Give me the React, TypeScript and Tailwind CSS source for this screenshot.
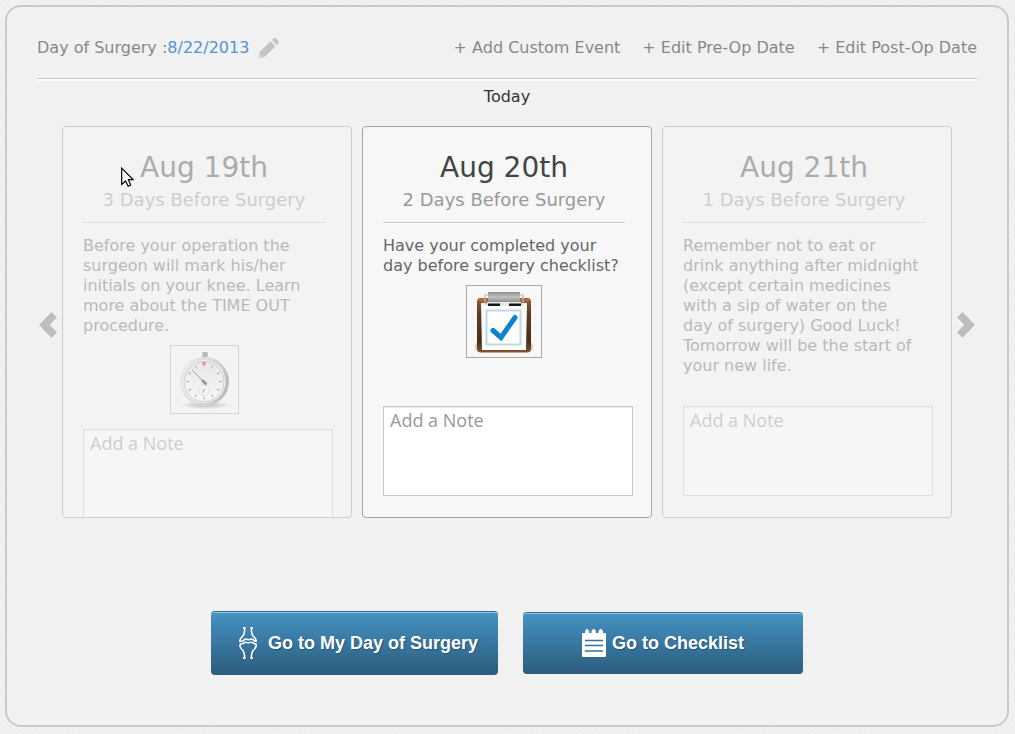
import type { ReactNode } from "react";

const sans = "font-['DejaVu_Sans',sans-serif]";

function PencilIcon() {
  return (
    <svg width="22" height="22" viewBox="0 0 22 22" fill="#c4c4c4" aria-hidden="true">
      <path d="M1 21 L1.6 14.8 L12.6 4.2 L17.6 9.4 L6.8 19.8 Z M2.4 17.6 L2.2 19.8 L4.4 19.6 Z" fillRule="evenodd" />
      <path d="M14 3 L16.4 0.8 Q17 0.4 17.6 1 L20.8 4.4 Q21.4 5 20.8 5.8 L18.8 8 Z" />
    </svg>
  );
}

function ArrowIcon({ flip = false }: { flip?: boolean }) {
  return (
    <svg width="18" height="28" viewBox="0 0 18 28" className={flip ? "rotate-180" : ""} aria-hidden="true">
      <path d={flip ? "M12.5 0 L18 6 L11.5 12 L18 19 L12.5 25 L0 12 Z" : "M12.5 3 L18 9 L11.5 15 L18 22 L12.5 28 L0 15 Z"} fill="#fcfcfc" />
      <path d="M12.5 1 L18 6.5 L11 14 L18 21.5 L12.5 27 L0 14 Z" fill="#bdbdbd" />
    </svg>
  );
}

function StopwatchIcon() {
  const ticks = Array.from({ length: 12 }, (_, i) => i * 30);
  return (
    <svg width="61" height="61" viewBox="0 0 61 61" aria-hidden="true">
      <defs>
        <linearGradient id="watchRim" x1="0" y1="0.2" x2="1" y2="0.5">
          <stop offset="0" stopColor="#e2e2e6" />
          <stop offset="0.4" stopColor="#c2c2c8" />
          <stop offset="0.75" stopColor="#a0a0a4" />
          <stop offset="1" stopColor="#66666a" />
        </linearGradient>
        <linearGradient id="watchFace" x1="0" y1="0" x2="0" y2="1">
          <stop offset="0" stopColor="#dcdcde" />
          <stop offset="1" stopColor="#ffffff" />
        </linearGradient>
        <radialGradient id="watchShadow">
          <stop offset="0" stopColor="#666" />
          <stop offset="1" stopColor="#666" stopOpacity="0" />
        </radialGradient>
      </defs>
      <ellipse cx="31" cy="56" rx="25" ry="4" fill="url(#watchShadow)" />
      <rect x="28" y="3" width="6" height="5" rx="1" fill="#80808c" />
      <rect x="30" y="3" width="2" height="5" fill="#50505e" />
      <path d="M24 10 Q31 6 37 10 L35 13 H27 Z" fill="#f5f5f5" />
      <circle cx="30.5" cy="32.5" r="24.5" fill="url(#watchRim)" />
      <circle cx="30" cy="32.5" r="21.5" fill="#f7f7f7" />
      <circle cx="30" cy="32.5" r="20" fill="url(#watchFace)" stroke="#97979c" strokeWidth="1" />
      {ticks.map((angle) => (
        <path key={angle} d="M30 14.5 V17.5" stroke="#444" strokeWidth="0.9" transform={`rotate(${angle} 30 32.5)`} />
      ))}
      <circle cx="30" cy="14.5" r="1.8" fill="#ff0000" />
      <circle cx="30" cy="41" r="5.5" fill="none" stroke="#888" strokeWidth="0.8" strokeDasharray="1 1" />
      <path d="M28.5 44 L30.5 40" stroke="#333" />
      <path d="M18 21 L31 34" stroke="#333" strokeWidth="1" />
      <path d="M28 31 L32.5 35.5" stroke="#111" strokeWidth="2.6" />
    </svg>
  );
}

function ClipboardIcon() {
  return (
    <svg width="60" height="65" viewBox="0 0 60 65" aria-hidden="true">
      <defs>
        <linearGradient id="board" x1="0" y1="0" x2="0" y2="1">
          <stop offset="0" stopColor="#9a5b34" />
          <stop offset="0.3" stopColor="#5e3a24" />
          <stop offset="0.8" stopColor="#4a2d1c" />
          <stop offset="1" stopColor="#8a5230" />
        </linearGradient>
        <linearGradient id="clip" x1="0" y1="0" x2="0" y2="1">
          <stop offset="0" stopColor="#8c8c8c" />
          <stop offset="0.5" stopColor="#c2c2c2" />
          <stop offset="1" stopColor="#909090" />
        </linearGradient>
      </defs>
      <path d="M2 53 Q0 60 3 61 H57 Q60 60 58 53 Z" fill="#cfcfcf" />
      <rect x="3" y="8" width="54" height="54.5" rx="4" fill="url(#board)" />
      <rect x="4" y="8" width="52" height="4" rx="2" fill="#a86a42" />
      <path d="M7 13 H53 L52 60 H8 Z" fill="#fbfbf8" />
      <path d="M14 2 H46 V12 H14 Z" fill="url(#clip)" />
      <path d="M14 5 H11 V14 H14 M46 5 H49 V14 H46" fill="none" stroke="#bcbcbc" strokeWidth="1.2" />
      <rect x="13" y="12" width="34" height="4" fill="#e8e8e8" />
      <rect x="14" y="13.5" width="12" height="2.5" fill="#171717" />
      <rect x="35" y="13.5" width="12" height="2.5" fill="#171717" />
      <rect x="12.5" y="20.5" width="34" height="34" fill="#fefefe" stroke="#bcdbe9" strokeWidth="2" />
      <path d="M19 40.5 L27 47.5 L41 27.5" fill="none" stroke="#0b82d0" strokeWidth="5" strokeLinecap="round" />
    </svg>
  );
}

function KneeIcon() {
  return (
    <svg width="18" height="32" viewBox="0 0 18 32" fill="none" stroke="#fff" strokeWidth="1.6" aria-hidden="true">
      <path d="M4 0.8 H6.5 M11.5 0.8 H14" />
      <path d="M5.5 0.5 C6 6 5 8.5 2.5 10.5 C0.8 12 0.7 13 0.8 14.5 C3.5 15 4.5 13.5 6 12.3 C7.5 11.2 8.5 12.8 9.5 12.8 C11 12.8 12 11 14 12.6 C15.5 14 16 14.3 17.2 14.3 C17.4 12.5 16.8 11.7 15.5 10.5 C13 8.5 12 6 12.5 0.5" />
      <path d="M1 17.3 C4 17.3 5 15 7 15.2 C8 15.4 8.4 16 9.3 16 C10.5 16 11 15 12.5 15.2 C14.5 15.6 15 17 17.2 17.3 C17.4 19.5 16.8 20.5 15.5 22 C13 24 12 26 12.5 31.5 M5.5 31.5 C6 26 5 24 2.5 22 C1 20.5 0.6 19.5 1 17.3" />
      <path d="M4 31.2 H6.5 M11.5 31.2 H14" />
    </svg>
  );
}

function NotepadIcon() {
  return (
    <svg width="24" height="28" viewBox="0 0 24 28" aria-hidden="true">
      <path d="M1 4 H3 V2 Q5 -2 7 2 V4 H9.5 V2 Q11.7 -2 13.8 2 V4 H16.5 V2 Q18.7 -2 21 2 V4 H23 Q24 4 24 5 V27 Q24 28 23 28 H1 Q0 28 0 27 V5 Q0 4 1 4 Z" fill="#fff" />
      <path d="M3.5 11.5 H20.5 M3.5 16.5 H20.5 M3.5 22 H20.5" stroke="#3a719a" strokeWidth="1.6" strokeLinecap="round" />
    </svg>
  );
}

function PointerIcon() {
  return (
    <svg width="13" height="21" viewBox="0 0 13 21" className="absolute left-[121px] top-[167px] pointer-events-none" aria-hidden="true">
      <path d="M0.7 1.2 V17.5 L4.5 14 L7.2 19.3 L9.6 18 L7.4 12.7 H12 Z" fill="#fff" stroke="#000" strokeWidth="1.2" />
    </svg>
  );
}

type Day = {
  date: string;
  countdown: string;
  text: string;
  active?: boolean;
  picture?: ReactNode;
};

const days: Day[] = [
  {
    date: "Aug 19th",
    countdown: "3 Days Before Surgery",
    text: "Before your operation the surgeon will mark his/her initials on your knee. Learn more about the TIME OUT procedure.",
    picture: <StopwatchIcon />,
  },
  {
    date: "Aug 20th",
    countdown: "2 Days Before Surgery",
    text: "Have your completed your day before surgery checklist?",
    active: true,
    picture: <ClipboardIcon />,
  },
  {
    date: "Aug 21th",
    countdown: "1 Days Before Surgery",
    text: "Remember not to eat or drink anything after midnight (except certain medicines with a sip of water on the day of surgery) Good Luck! Tomorrow will be the start of your new life.",
  },
];

function DayCard({ date, countdown, text, active = false, picture }: Day) {
  return (
    <article
      className={`h-[392px] min-w-0 overflow-hidden rounded-[4px] border bg-[#f7f7f7] pt-[21px] pr-[18px] pl-5 ${
        active ? "border-[#a5a5a5]" : "border-[#999] opacity-40"
      }`}
    >
      <div className="mr-2">
        <h2 className="text-center text-[28px] leading-10 text-[#444]">{date}</h2>
        <p className="text-center text-lg leading-6 text-[#999]">{countdown}</p>
        <hr className="mt-[10px] mb-[13px] border-[#c8c8c8] shadow-[0_1px_0_#fbfdff]" />
        <div className="min-h-[155px]">
          <p className="pr-[5px] text-base leading-5 text-[#666]">{text}</p>
          {picture && (
            <div className="mx-auto mt-[9px] w-fit border border-[#a9a9a9]">
              <div className={active ? "px-[7px] pt-1 pb-[2px]" : "p-[3px]"}>{picture}</div>
            </div>
          )}
        </div>
      </div>
      <textarea
        aria-label={`Note for ${date}`}
        placeholder="Add a Note"
        className="mt-[15px] block h-[90px] w-full resize-none border border-[#c8c8c8] bg-white px-[6px] py-px font-['Open_Sans',sans-serif] text-lg leading-6 shadow-[inset_0_1px_1px_#eee] placeholder:text-[#999]"
      />
    </article>
  );
}

const actions = ["+ Add Custom Event", "+ Edit Pre-Op Date", "+ Edit Post-Op Date"];

const bigButton =
  "flex items-center justify-center rounded-[4px] border-t border-[#2d6b92] bg-linear-to-b from-[#4593c4] to-[#2b5c7c] pb-[2px] font-['Liberation_Sans',Arial,sans-serif] text-lg font-bold text-white shadow-[inset_0_1px_0_#9cc8e2] [text-shadow:1px_1px_1px_#285774]";

export default function App() {
  return (
    <div
      className={`relative flex min-h-screen bg-[#f0f2f1] bg-[repeating-linear-gradient(45deg,#eceeed_0_1px,transparent_1px_4px)] pt-[5px] pr-[6px] pb-[7px] pl-[5px] ${sans}`}
    >
      <main className="flex-1 rounded-[16px] border-2 border-[#cacaca] bg-[#f1f1f1] px-[30px] pt-[29px]">
        <header className="flex items-center justify-between border-b border-[#c8c8c8] pb-[18px] text-base leading-6 text-[#888] shadow-[0_2px_0_#f9fbfe]">
          <div className="flex items-center">
            <span>Day of Surgery :</span>
            <span className="text-[#5792d3]">8/22/2013</span>
            <button type="button" aria-label="Edit day of surgery" className="ml-[9px]">
              <PencilIcon />
            </button>
          </div>
          <nav className="flex gap-[22px]">
            {actions.map((action) => (
              <button key={action} type="button">
                {action}
              </button>
            ))}
          </nav>
        </header>

        <p className="mt-2 mb-[19px] text-center text-base leading-5 text-[#333]">Today</p>

        {/* Timeline */}
        <section className="flex items-center">
          <button type="button" aria-label="Previous day" className="w-[25px] shrink-0 pt-[6px] pl-[2px]">
            <ArrowIcon />
          </button>
          <div className="grid min-w-0 flex-1 grid-cols-3 gap-[10px]">
            {days.map((day) => (
              <DayCard key={day.date} {...day} />
            ))}
          </div>
          <button type="button" aria-label="Next day" className="flex w-[25px] shrink-0 justify-end pt-[6px] pr-[2px]">
            <ArrowIcon flip />
          </button>
        </section>

        <div className="mt-[93px] flex items-center justify-center gap-[25px]">
          <button type="button" className={`${bigButton} h-16 w-[287px] gap-[11px] pl-2`}>
            <KneeIcon />
            Go to My Day of Surgery
          </button>
          <button type="button" className={`${bigButton} h-[62px] w-[280px] gap-[6px]`}>
            <NotepadIcon />
            Go to Checklist
          </button>
        </div>
      </main>
      <PointerIcon />
    </div>
  );
}
